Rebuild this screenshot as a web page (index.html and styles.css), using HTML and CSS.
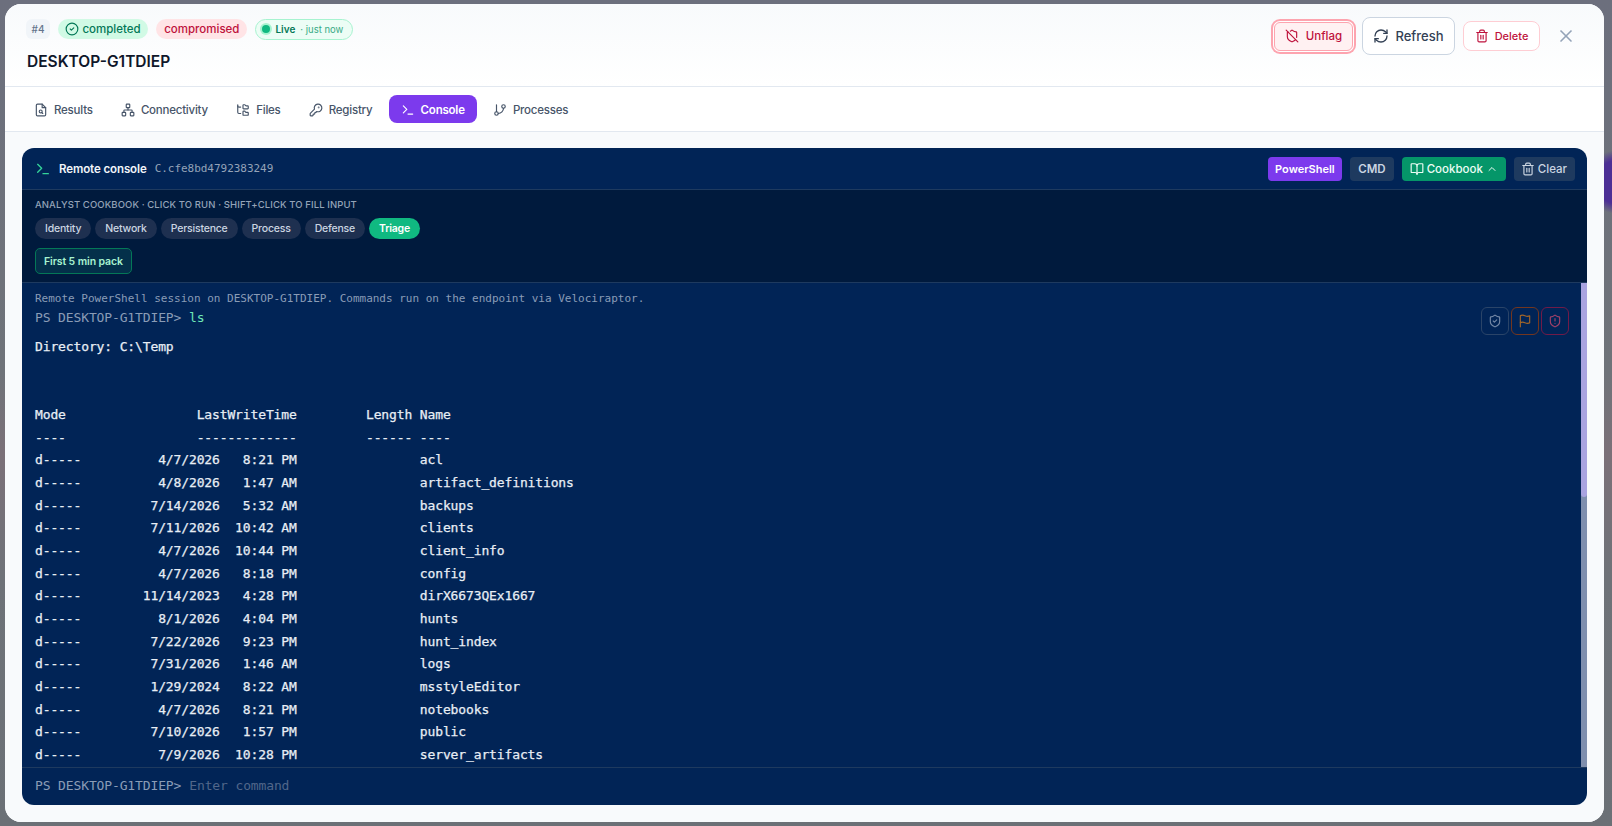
FILE: index.html
```html
<!DOCTYPE html>
<html lang="en">
<head>
<meta charset="utf-8">
<title>DESKTOP-G1TDIEP</title>
<link rel="stylesheet" href="styles.css">
</head>
<body>
<svg class="sprite" aria-hidden="true">
  <symbol id="i-check" viewBox="0 0 24 24"><circle cx="12" cy="12" r="10"/><path d="m9 12 2 2 4-4"/></symbol>
  <symbol id="i-shield-off" viewBox="0 0 24 24"><path d="m2 2 20 20"/><path d="M5 5a1 1 0 0 0-1 1v7c0 5 3.5 7.5 7.67 8.94a1 1 0 0 0 .67.01c2.35-.82 4.48-1.97 5.9-3.71"/><path d="M9.309 3.652A12.252 12.252 0 0 0 11.24 2.28a1.17 1.17 0 0 1 1.52 0C14.51 3.81 17 5 19 5a1 1 0 0 1 1 1v7a9.784 9.784 0 0 1-.08 1.264"/></symbol>
  <symbol id="i-refresh" viewBox="0 0 24 24"><path d="M3 12a9 9 0 0 1 9-9 9.75 9.75 0 0 1 6.74 2.74L21 8"/><path d="M21 3v5h-5"/><path d="M21 12a9 9 0 0 1-9 9 9.75 9.75 0 0 1-6.74-2.74L3 16"/><path d="M8 16H3v5"/></symbol>
  <symbol id="i-trash" viewBox="0 0 24 24"><path d="M3 6h18"/><path d="M19 6v14c0 1-1 2-2 2H7c-1 0-2-1-2-2V6"/><path d="M8 6V4c0-1 1-2 2-2h4c1 0 2 1 2 2v2"/><path d="M10 11v6"/><path d="M14 11v6"/></symbol>
  <symbol id="i-x" viewBox="0 0 24 24"><path d="M18 6 6 18"/><path d="m6 6 12 12"/></symbol>
  <symbol id="i-file" viewBox="0 0 24 24"><path d="M14 2H6a2 2 0 0 0-2 2v16a2 2 0 0 0 2 2h12a2 2 0 0 0 2-2V8Z"/><path d="M14 2v6h6"/><circle cx="11.5" cy="14.5" r="2.5"/><path d="M13.3 16.3 15 18"/></symbol>
  <symbol id="i-network" viewBox="0 0 24 24"><rect x="16" y="16" width="6" height="6" rx="1"/><rect x="2" y="16" width="6" height="6" rx="1"/><rect x="9" y="2" width="6" height="6" rx="1"/><path d="M5 16v-3a1 1 0 0 1 1-1h12a1 1 0 0 1 1 1v3"/><path d="M12 12V8"/></symbol>
  <symbol id="i-tree" viewBox="0 0 24 24"><path d="M20 10a1 1 0 0 0 1-1V6a1 1 0 0 0-1-1h-2.5a1 1 0 0 1-.8-.4l-.9-1.2A1 1 0 0 0 15 3h-2a1 1 0 0 0-1 1v5a1 1 0 0 0 1 1Z"/><path d="M20 21a1 1 0 0 0 1-1v-3a1 1 0 0 0-1-1h-2.9a1 1 0 0 1-.88-.55l-.42-.85a1 1 0 0 0-.92-.6H13a1 1 0 0 0-1 1v5a1 1 0 0 0 1 1Z"/><path d="M3 5a2 2 0 0 0 2 2h3"/><path d="M3 3v13a2 2 0 0 0 2 2h3"/></symbol>
  <symbol id="i-key" viewBox="0 0 24 24"><path d="M2.586 17.414A2 2 0 0 0 2 18.828V21a1 1 0 0 0 1 1h3a1 1 0 0 0 1-1v-1a1 1 0 0 1 1-1h1a1 1 0 0 0 1-1v-1a1 1 0 0 1 1-1h.172a2 2 0 0 0 1.414-.586l.814-.814a6.5 6.5 0 1 0-4-4z"/><circle cx="16.5" cy="7.5" r=".5"/></symbol>
  <symbol id="i-term" viewBox="0 0 24 24"><path d="m4 17 6-6-6-6"/><path d="M12 19h8"/></symbol>
  <symbol id="i-branch" viewBox="0 0 24 24"><path d="M6 3v12"/><circle cx="18" cy="6" r="3"/><circle cx="6" cy="18" r="3"/><path d="M18 9a9 9 0 0 1-9 9"/></symbol>
  <symbol id="i-book" viewBox="0 0 24 24"><path d="M12 7v14"/><path d="M3 18a1 1 0 0 1-1-1V4a1 1 0 0 1 1-1h5a4 4 0 0 1 4 4 4 4 0 0 1 4-4h5a1 1 0 0 1 1 1v13a1 1 0 0 1-1 1h-6a3 3 0 0 0-3 3 3 3 0 0 0-3-3z"/></symbol>
  <symbol id="i-up" viewBox="0 0 24 24"><path d="m18 15-6-6-6 6"/></symbol>
  <symbol id="i-shield-check" viewBox="0 0 24 24"><path d="M20 13c0 5-3.5 7.5-7.66 8.95a1 1 0 0 1-.67-.01C7.5 20.5 4 18 4 13V6a1 1 0 0 1 1-1c2 0 4.5-1.2 6.24-2.72a1.17 1.17 0 0 1 1.52 0C14.51 3.81 17 5 19 5a1 1 0 0 1 1 1z"/><path d="m9 12 2 2 4-4"/></symbol>
  <symbol id="i-flag" viewBox="0 0 24 24"><path d="M4 15s1-1 4-1 5 2 8 2 4-1 4-1V3s-1 1-4 1-5-2-8-2-4 1-4 1z"/><path d="M4 22v-7"/></symbol>
  <symbol id="i-shield-alert" viewBox="0 0 24 24"><path d="M20 13c0 5-3.5 7.5-7.66 8.95a1 1 0 0 1-.67-.01C7.5 20.5 4 18 4 13V6a1 1 0 0 1 1-1c2 0 4.5-1.2 6.24-2.72a1.17 1.17 0 0 1 1.52 0C14.51 3.81 17 5 19 5a1 1 0 0 1 1 1z"/><path d="M12 8v4"/><path d="M12 16h.01"/></symbol>
</svg>

<div class="overlay">
  <div class="modal">
    <header class="head">
      <div class="head-left">
        <div class="badges">
          <span class="badge badge-id">#4</span>
          <span class="badge badge-ok"><svg class="ic ic-14"><use href="#i-check"/></svg>completed</span>
          <span class="badge badge-bad">compromised</span>
          <span class="live"><span class="live-dot"></span><b>Live</b><span class="live-time">· just now</span></span>
        </div>
        <h1 class="title">DESKTOP-G1TDIEP</h1>
      </div>
      <div class="actions">
        <button class="btn btn-unflag"><svg class="ic ic-14"><use href="#i-shield-off"/></svg>Unflag</button>
        <button class="btn btn-refresh"><svg class="ic ic-16"><use href="#i-refresh"/></svg>Refresh</button>
        <button class="btn btn-delete"><svg class="ic ic-14"><use href="#i-trash"/></svg>Delete</button>
        <button class="btn-close"><svg class="ic ic-20"><use href="#i-x"/></svg></button>
      </div>
    </header>

    <nav class="tabs">
      <a class="tab"><svg class="ic ic-14"><use href="#i-file"/></svg>Results</a>
      <a class="tab"><svg class="ic ic-14"><use href="#i-network"/></svg>Connectivity</a>
      <a class="tab"><svg class="ic ic-14"><use href="#i-tree"/></svg>Files</a>
      <a class="tab"><svg class="ic ic-14"><use href="#i-key"/></svg>Registry</a>
      <a class="tab tab-active"><svg class="ic ic-14"><use href="#i-term"/></svg>Console</a>
      <a class="tab"><svg class="ic ic-14"><use href="#i-branch"/></svg>Processes</a>
    </nav>

    <main class="body">
      <section class="console">
        <div class="con-head">
          <div class="con-title">
            <svg class="ic ic-16 green"><use href="#i-term"/></svg>
            <strong>Remote console</strong>
            <code class="con-id">C.cfe8bd4792383249</code>
          </div>
          <div class="con-actions">
            <button class="cbtn cbtn-ps">PowerShell</button>
            <button class="cbtn cbtn-cmd">CMD</button>
            <button class="cbtn cbtn-book"><svg class="ic ic-14"><use href="#i-book"/></svg>Cookbook<svg class="ic ic-12"><use href="#i-up"/></svg></button>
            <button class="cbtn cbtn-clear"><svg class="ic ic-14"><use href="#i-trash"/></svg>Clear</button>
          </div>
        </div>

        <div class="cookbook">
          <div class="cook-label">Analyst cookbook · click to run · shift+click to fill input</div>
          <div class="pills">
            <span class="pill">Identity</span>
            <span class="pill">Network</span>
            <span class="pill">Persistence</span>
            <span class="pill">Process</span>
            <span class="pill">Defense</span>
            <span class="pill pill-on">Triage</span>
          </div>
          <button class="pack">First 5 min pack</button>
        </div>

        <div class="output">
          <div class="intro">Remote PowerShell session on DESKTOP-G1TDIEP. Commands run on the endpoint via Velociraptor.</div>
          <div class="cmd">PS DESKTOP-G1TDIEP&gt; <span class="cmd-in">ls</span></div>
          <pre class="result"><b>Directory: C:\Temp</b>


Mode                 LastWriteTime         Length Name
----                 -------------         ------ ----
d-----          4/7/2026   8:21 PM                acl
d-----          4/8/2026   1:47 AM                artifact_definitions
d-----         7/14/2026   5:32 AM                backups
d-----         7/11/2026  10:42 AM                clients
d-----          4/7/2026  10:44 PM                client_info
d-----          4/7/2026   8:18 PM                config
d-----        11/14/2023   4:28 PM                dirX6673QEx1667
d-----          8/1/2026   4:04 PM                hunts
d-----         7/22/2026   9:23 PM                hunt_index
d-----         7/31/2026   1:46 AM                logs
d-----         1/29/2024   8:22 AM                msstyleEditor
d-----          4/7/2026   8:21 PM                notebooks
d-----         7/10/2026   1:57 PM                public
d-----          7/9/2026  10:28 PM                server_artifacts</pre>
          <div class="flags">
            <button class="flag flag-slate"><svg class="ic ic-14"><use href="#i-shield-check"/></svg></button>
            <button class="flag flag-amber"><svg class="ic ic-14"><use href="#i-flag"/></svg></button>
            <button class="flag flag-red"><svg class="ic ic-14"><use href="#i-shield-alert"/></svg></button>
          </div>
          <div class="track"><div class="thumb"></div></div>
        </div>

        <div class="prompt">
          <span class="prompt-ps">PS DESKTOP-G1TDIEP&gt;</span>
          <input class="prompt-in" placeholder="Enter command">
        </div>
      </section>
    </main>
  </div>
</div>
</body>
</html>
```

FILE: styles.css
```css
* { box-sizing: border-box; }
html, body { height: 100%; }
body {
  margin: 0;
  font-family: Inter, "Noto Sans", sans-serif;
  overflow: hidden;
  background:
    radial-gradient(circle at 1618px 182px, #4c2f95 0 22px, transparent 32px),
    linear-gradient(180deg, #6c6f7d 0%, #6f7379 45%, #7b7078 55%, #6e7278 70%, #6b7076 100%);
}
.sprite { display: none; }
.ic { fill: none; stroke: currentColor; stroke-width: 2; stroke-linecap: round; stroke-linejoin: round; flex: none; }
.ic-12 { width: 12px; height: 12px; }
.ic-14 { width: 14px; height: 14px; }
.ic-16 { width: 16px; height: 16px; }
.ic-20 { width: 20px; height: 20px; }
button { font-family: inherit; cursor: pointer; }

.overlay { height: 826px; padding: 4px 8px 4px 5px; }
.modal {
  height: 100%;
  background: #f8fafc;
  border-radius: 16px;
  display: flex;
  flex-direction: column;
  overflow: hidden;
}

/* header */
.head {
  height: 83px;
  flex: none;
  padding: 14px 26px 0 21px;
  display: flex;
  justify-content: space-between;
  align-items: flex-start;
  background: linear-gradient(180deg, #f8fafc, #ffffff);
  border-bottom: 1px solid #e2e8f0;
}
.badges { display: flex; align-items: center; gap: 8px; height: 22px; }
.badge {
  display: inline-flex;
  align-items: center;
  gap: 4px;
  height: 20px;
  border-radius: 10px;
  padding: 0 8px;
  font-size: 11.5px;
  font-weight: 500;
}
.badge-id { background: #f1f5f9; color: #64748b; border-radius: 6px; font-size: 10px; padding: 0 5.5px; }
.badge-ok { background: #d1fae5; color: #047857; padding: 0 7.5px; gap: 3px; }
.badge-bad { background: #ffe4e6; color: #be123c; }
.live {
  display: inline-flex;
  align-items: center;
  height: 21px;
  padding: 0 9px 0 6px;
  border-radius: 11px;
  background: #ecfdf5;
  border: 1px solid #a7f3d0;
  font-size: 10px;
  color: #047857;
}
.live b { font-weight: 600; margin-left: 5px; }
.live-dot { width: 8px; height: 8px; border-radius: 50%; background: #10b981; box-shadow: 0 0 0 2px #a7f3d0; }
.live-time { margin-left: 5px; font-size: 9.5px; color: #059669; opacity: .8; }
.title { margin: 10px 0 0 1px; font-size: 15.5px; line-height: 24px; font-weight: 600; color: #0f172a; }

.actions { display: flex; align-items: center; gap: 8px; height: 38px; margin-top: -1px; }
.btn {
  display: inline-flex;
  align-items: center;
  justify-content: center;
  gap: 6px;
  background: #fff;
  border: 1px solid #cbd5e1;
  font-weight: 500;
}
.btn-unflag {
  width: 79px;
  height: 29px;
  margin: 0 1px 0 3px;
  border-radius: 6px;
  border-color: #fda4af;
  background: #fff1f2;
  color: #be123c;
  font-size: 11.5px;
  gap: 7px;
  box-shadow: 0 0 0 1px #fff, 0 0 0 3px #fda4af;
}
.btn-refresh { width: 93px; height: 38px; border-radius: 8px; color: #334155; font-size: 13px; }
.btn-delete { width: 77px; height: 30px; border-radius: 8px; border-color: #fecdd3; color: #be123c; font-size: 11px; }
.btn-close { background: none; border: 0; padding: 0; width: 24px; height: 24px; margin-left: 6px; color: #94a3b8; display: flex; align-items: center; justify-content: center; }

/* tabs */
.tabs {
  height: 45px;
  flex: none;
  padding: 0 17px;
  background: #fff;
  border-bottom: 1px solid #e2e8f0;
  display: flex;
  align-items: center;
  gap: 4.2px;
}
.tab {
  display: flex;
  align-items: center;
  gap: 6px;
  height: 28px;
  padding: 1px 12px 0;
  border-radius: 8px;
  font-size: 11.5px;
  letter-spacing: -.22px;
  font-weight: 500;
  color: #475569;
}
.tab-active { background: #7c3aed; color: #fff; font-weight: 600; }

/* console */
.body { flex: 1; min-height: 0; padding: 16px 17px 17px; background: #f8fafc; }
.console {
  height: 100%;
  background: #012456;
  border-radius: 12px;
  display: flex;
  flex-direction: column;
  overflow: hidden;
}
.con-head {
  height: 42px;
  flex: none;
  padding: 0 12px 0 13px;
  display: flex;
  justify-content: space-between;
  align-items: center;
  border-bottom: 1px solid #1e3a5f;
}
.con-title { display: flex; align-items: center; gap: 8px; color: #fff; font-size: 11.5px; letter-spacing: -.1px; }
.con-title strong { font-weight: 600; color: #f1f5f9; }
.green { color: #34d399; }
.con-id { font-family: "DejaVu Sans Mono", monospace; font-size: 11px; letter-spacing: -.03px; color: #94a3b8; }
.con-actions { display: flex; gap: 8px; }
.cbtn {
  display: inline-flex;
  align-items: center;
  gap: 4px;
  height: 24px;
  padding: 0 8px;
  border: 0;
  border-radius: 4px;
  background: #1e3a5f;
  color: #cbd5e1;
  font-size: 11.5px;
  font-weight: 500;
}
.cbtn-ps { background: #7c3aed; color: #fff; font-size: 11px; font-weight: 600; padding: 0 7.5px; }
.cbtn-cmd { font-weight: 600; }
.cbtn-book { background: #059669; color: #ecfdf5; gap: 3px; }
.cbtn-clear { padding: 0 8px 0 7px; gap: 3px; }

.cookbook {
  height: 93px;
  flex: none;
  padding: 8px 13px 0;
  background: #001a3d;
  border-bottom: 1px solid #1e3a5f;
}
.cook-label { font-size: 9.5px; line-height: 14px; font-weight: 500; text-transform: uppercase; letter-spacing: .1px; color: #94a3b8; }
.pills { display: flex; gap: 4px; margin-top: 6px; }
.pill {
  height: 21px;
  line-height: 21px;
  padding: 0 10px;
  border-radius: 11px;
  background: #1e3050;
  color: #cbd5e1;
  font-size: 10.5px;
  letter-spacing: -.2px;
  font-weight: 500;
}
.pill-on { background: #10b981; color: #fff; font-weight: 600; }
.pack {
  display: block;
  margin-top: 9px;
  height: 26px;
  padding: 0 8px;
  border-radius: 5px;
  border: 1px solid #047857;
  background: #04304a;
  color: #a7f3d0;
  font-size: 10.5px;
  letter-spacing: -.1px;
  font-weight: 600;
}

.output {
  position: relative;
  flex: 1;
  min-height: 0;
  overflow: hidden;
  padding: 8px 13px 0;
  font-family: "DejaVu Sans Mono", monospace;
}
.intro { font-size: 11px; line-height: 16px; color: #8a9cb6; }
.cmd { font-size: 13px; letter-spacing: -.13px; line-height: 21px; color: #8a9cb6; }
.cmd-in { color: #6ee7b7; }
.result {
  margin: 8px 0 0;
  font: inherit;
  font-size: 13px;
  letter-spacing: -.13px;
  line-height: 22.65px;
  color: #e8eef5;
  -webkit-text-stroke: .25px #e8eef5;
}
.result b { font-weight: 400; }
.flags { position: absolute; top: 24px; right: 18px; display: flex; gap: 2px; }
.flag {
  width: 28px;
  height: 28px;
  padding: 0;
  border-radius: 6px;
  background: transparent;
  display: flex;
  align-items: center;
  justify-content: center;
  border: 1px solid;
}
.flag-slate { border-color: #2a4468; color: #7488a6; }
.flag-amber { border-color: #73361f; color: #a0652a; }
.flag-red { border-color: #701b48; color: #a04068; }
.track { position: absolute; top: 0; right: 0; bottom: 0; width: 6px; background: #7f8fae; }
.thumb { height: 214px; background: #a9a3e0; border-radius: 0 0 3px 3px; }

.prompt {
  height: 38px;
  flex: none;
  display: flex;
  align-items: center;
  gap: 8px;
  padding: 0 13px 2px;
  border-top: 1px solid #1e3a5f;
  font-family: "DejaVu Sans Mono", monospace;
  font-size: 13px;
  letter-spacing: -.13px;
  color: #8a9cb6;
}
.prompt-in {
  flex: 1;
  background: transparent;
  border: 0;
  outline: 0;
  padding: 0;
  font: inherit;
  letter-spacing: inherit;
  color: #e8eef5;
}
.prompt-in::placeholder { color: #51678a; opacity: 1; }
```
